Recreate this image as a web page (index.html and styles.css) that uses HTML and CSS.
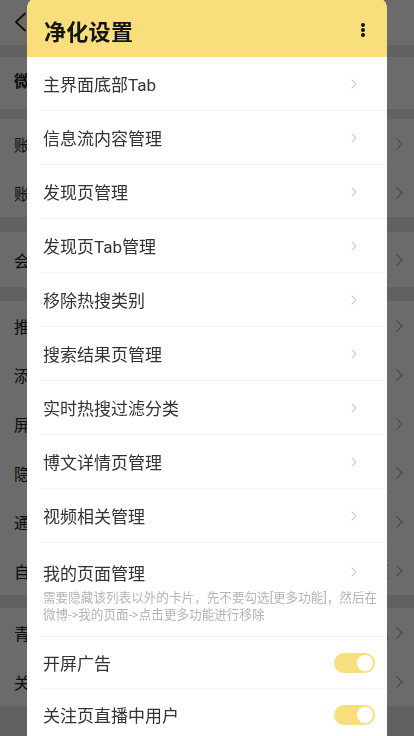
FILE: index.html
```html
<!DOCTYPE html>
<html lang="zh-CN">
<head>
<meta charset="utf-8">
<meta name="viewport" content="width=device-width, initial-scale=1">
<title>净化设置</title>
<link rel="stylesheet" href="styles.css">
</head>
<body>
<div class="page">
  <div class="topbar">
    <svg class="back" width="14" height="20" viewBox="0 0 14 20"><path d="M12 1.5 L3 10 L12 18.5" fill="none" stroke="#222" stroke-width="1.8" stroke-linecap="round" stroke-linejoin="round"/></svg>
  </div>
  <div class="band b-top"></div>
  <div class="prow head"><span class="ptext bold">微博设置</span></div>
  <div class="band b-1"></div>
  <div class="prow"><span class="ptext">账号管理</span><span class="pchev"></span></div>
  <div class="prow"><span class="ptext">账号与安全</span><span class="pchev"></span></div>
  <div class="band b-2"></div>
  <div class="prow tall"><span class="ptext">会员设置</span><span class="pchev"></span></div>
  <div class="band b-3"></div>
  <div class="prow"><span class="ptext">推送通知设置</span><span class="pchev"></span></div>
  <div class="prow"><span class="ptext">添加小组件</span><span class="pchev"></span></div>
  <div class="prow"><span class="ptext">屏蔽设置</span><span class="pchev"></span></div>
  <div class="prow"><span class="ptext">隐私设置</span><span class="pchev"></span></div>
  <div class="prow"><span class="ptext">通用设置</span><span class="pchev"></span></div>
  <div class="prow"><span class="ptext">自定义首页</span><span class="pval">首页</span><span class="pchev"></span></div>
  <div class="band b-4"></div>
  <div class="prow"><span class="ptext">青少年模式</span><span class="pval">未开启</span><span class="pchev"></span></div>
  <div class="prow"><span class="ptext">关于微博</span><span class="pchev"></span></div>
  <div class="band b-5"></div>
</div>

<div class="overlay"></div>

<div class="dialog">
  <div class="dlg-head">
    <span class="dlg-title">净化设置</span>
    <span class="more"><i></i><i></i><i></i></span>
  </div>
  <div class="dlg-list">
    <div class="item"><span class="label">主界面底部Tab</span><svg class="chev" width="6" height="10" viewBox="0 0 6 10"><path d="M1 1 L5 5 L1 9" fill="none" stroke="#cccccc" stroke-width="1.1" stroke-linecap="round" stroke-linejoin="round"/></svg></div>
    <div class="item"><span class="label">信息流内容管理</span><svg class="chev" width="6" height="10" viewBox="0 0 6 10"><path d="M1 1 L5 5 L1 9" fill="none" stroke="#cccccc" stroke-width="1.1" stroke-linecap="round" stroke-linejoin="round"/></svg></div>
    <div class="item"><span class="label">发现页管理</span><svg class="chev" width="6" height="10" viewBox="0 0 6 10"><path d="M1 1 L5 5 L1 9" fill="none" stroke="#cccccc" stroke-width="1.1" stroke-linecap="round" stroke-linejoin="round"/></svg></div>
    <div class="item"><span class="label">发现页Tab管理</span><svg class="chev" width="6" height="10" viewBox="0 0 6 10"><path d="M1 1 L5 5 L1 9" fill="none" stroke="#cccccc" stroke-width="1.1" stroke-linecap="round" stroke-linejoin="round"/></svg></div>
    <div class="item"><span class="label">移除热搜类别</span><svg class="chev" width="6" height="10" viewBox="0 0 6 10"><path d="M1 1 L5 5 L1 9" fill="none" stroke="#cccccc" stroke-width="1.1" stroke-linecap="round" stroke-linejoin="round"/></svg></div>
    <div class="item"><span class="label">搜索结果页管理</span><svg class="chev" width="6" height="10" viewBox="0 0 6 10"><path d="M1 1 L5 5 L1 9" fill="none" stroke="#cccccc" stroke-width="1.1" stroke-linecap="round" stroke-linejoin="round"/></svg></div>
    <div class="item"><span class="label">实时热搜过滤分类</span><svg class="chev" width="6" height="10" viewBox="0 0 6 10"><path d="M1 1 L5 5 L1 9" fill="none" stroke="#cccccc" stroke-width="1.1" stroke-linecap="round" stroke-linejoin="round"/></svg></div>
    <div class="item"><span class="label">博文详情页管理</span><svg class="chev" width="6" height="10" viewBox="0 0 6 10"><path d="M1 1 L5 5 L1 9" fill="none" stroke="#cccccc" stroke-width="1.1" stroke-linecap="round" stroke-linejoin="round"/></svg></div>
    <div class="item"><span class="label">视频相关管理</span><svg class="chev" width="6" height="10" viewBox="0 0 6 10"><path d="M1 1 L5 5 L1 9" fill="none" stroke="#cccccc" stroke-width="1.1" stroke-linecap="round" stroke-linejoin="round"/></svg></div>
    <div class="item item-desc">
      <div class="item-line"><span class="label">我的页面管理</span><svg class="chev" width="6" height="10" viewBox="0 0 6 10"><path d="M1 1 L5 5 L1 9" fill="none" stroke="#cccccc" stroke-width="1.1" stroke-linecap="round" stroke-linejoin="round"/></svg></div>
      <p class="desc">需要隐藏该列表以外的卡片，先不要勾选[更多功能]，然后在微博-&gt;我的页面-&gt;点击更多功能进行移除</p>
    </div>
    <div class="item item-switch"><span class="label">开屏广告</span><span class="switch"><span class="knob"></span></span></div>
    <div class="item item-switch"><span class="label">关注页直播中用户</span><span class="switch"><span class="knob"></span></span></div>
  </div>
</div>
</body>
</html>
```

FILE: styles.css
```css
* { box-sizing: border-box; }
html, body {
  margin: 0;
  padding: 0;
  width: 414px;
  height: 736px;
  overflow: hidden;
  font-family: Roboto, "Noto Sans CJK SC", sans-serif;
  background: #ffffff;
}

/* background settings page */
.page {
  display: flex;
  flex-direction: column;
  width: 414px;
}
.topbar {
  height: 45px;
  display: flex;
  align-items: center;
  padding-left: 13px;
}
.back { display: block; margin-top: -2px; }
.band { background: #e6e6e6; }
.b-top { height: 12px; }
.b-1 { height: 10px; }
.b-2 { height: 15px; }
.b-3 { height: 14px; }
.b-4 { height: 13px; }
.b-5 { height: 30px; }
.prow {
  height: 49px;
  display: flex;
  align-items: center;
  padding: 0 11px 0 14px;
  gap: 4px;
}
.prow.head { height: 52px; padding-bottom: 6px; }
.prow.tall { height: 55px; }
.ptext {
  flex: 1;
  font-size: 16px;
  color: #222;
}
.ptext.bold { font-weight: 700; }
.pval {
  font-size: 15px;
  color: #777;
}
.pchev {
  width: 8px;
  height: 8px;
  border-top: 1.5px solid #aaa;
  border-right: 1.5px solid #aaa;
  transform: rotate(45deg);
  margin-right: 2px;
}

.overlay {
  position: fixed;
  inset: 0;
  background: rgba(0, 0, 0, 0.58);
}

/* dialog */
.dialog {
  position: absolute;
  left: 27px;
  top: -3px;
  width: 360px;
  height: 760px;
  background: #ffffff;
  border-radius: 12px 12px 0 0;
  overflow: hidden;
}
.dlg-head {
  height: 60px;
  padding: 6px 22px 0 17px;
  background: #f8df7b;
  display: flex;
  align-items: center;
  justify-content: space-between;
}
.dlg-title {
  font-size: 22px;
  font-weight: 700;
  color: #151515;
  letter-spacing: 0.3px;
}
.more {
  display: flex;
  flex-direction: column;
  gap: 1.2px;
}
.more i {
  display: block;
  width: 4px;
  height: 4px;
  border-radius: 50%;
  background: #111;
}
.dlg-list {
  padding-left: 13px;
}
.item {
  height: 54px;
  display: flex;
  align-items: center;
  justify-content: space-between;
  padding: 0 30px 0 3px;
  border-bottom: 1px solid #f3f3f3;
}
.label {
  font-size: 17px;
  color: #333;
}
.chev { display: block; }
.item-desc {
  height: auto;
  display: block;
  padding-top: 18px;
  padding-bottom: 13px;
}
.item-line {
  height: 22px;
  display: flex;
  align-items: center;
  justify-content: space-between;
}
.desc {
  margin: 6px -24px 0 0;
  font-size: 12.6px;
  line-height: 17px;
  color: #b5b5b5;
}
.item-switch {
  height: 52px;
  padding-right: 12px;
}
.switch {
  width: 41px;
  height: 20px;
  border-radius: 10px;
  background: #f6df7c;
  display: flex;
  align-items: center;
  justify-content: flex-end;
  padding-right: 2px;
}
.knob {
  width: 16px;
  height: 16px;
  border-radius: 50%;
  background: #ffffff;
}
```
